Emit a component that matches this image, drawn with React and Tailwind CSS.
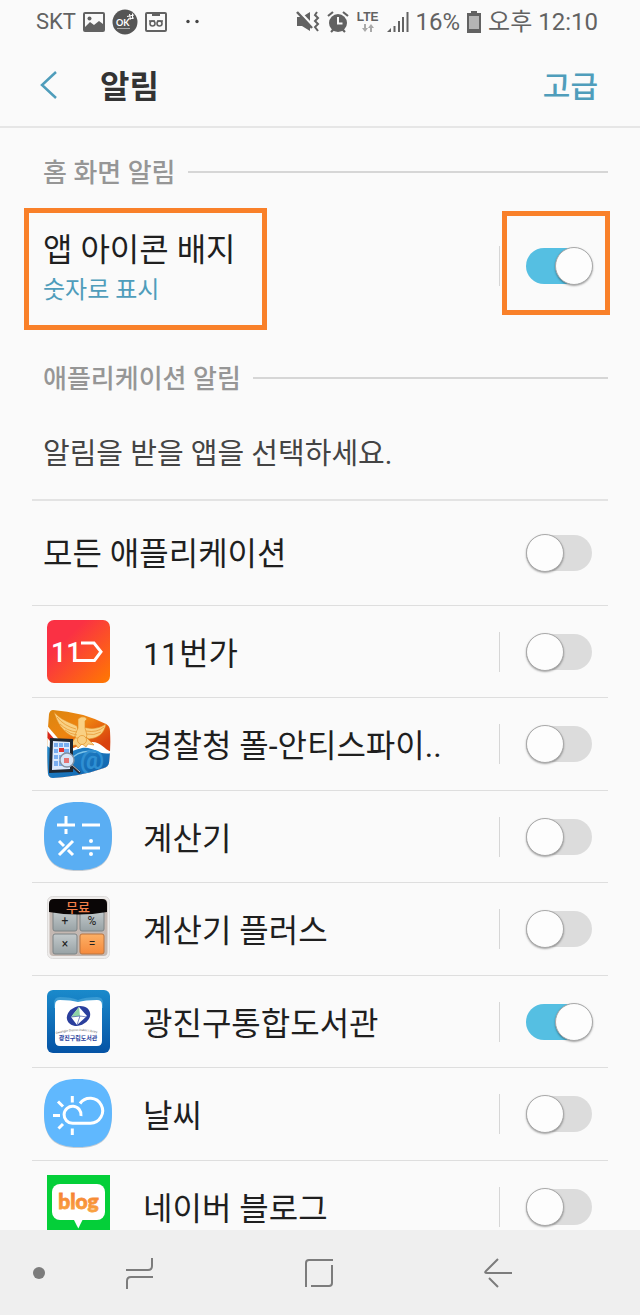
import React, { useState } from "react";

const SQUIRCLE =
  "M34 0 C58 0 68 10 68 34 C68 58 58 68 34 68 C10 68 0 58 0 34 C0 10 10 0 34 0 Z";

const ElevenIcon = () => (
  <svg viewBox="0 0 68 68" className="size-[68px]" aria-hidden="true">
    <defs>
      <linearGradient id="eleven" x1="0" y1="0" x2="1" y2="1">
        <stop offset="0.3" stopColor="#fa3144" />
        <stop offset="1" stopColor="#ff7a00" />
      </linearGradient>
    </defs>
    <rect x="3" y="2" width="63" height="63" rx="7" fill="url(#eleven)" />
    <text x="7" y="44" fill="#fff" className="font-[Roboto,sans-serif] text-[27px] font-medium">
      11
    </text>
    <path
      d="M29 42.5H50.5L57 33.7L50 25H37"
      fill="none"
      stroke="#fff"
      strokeWidth="3"
    />
  </svg>
);

const PoliceIcon = () => (
  <svg viewBox="0 0 68 68" className="size-[68px]" aria-hidden="true">
    <defs>
      <linearGradient id="sunset" x1="0" y1="0" x2="0.7" y2="1">
        <stop offset="0" stopColor="#d9860f" />
        <stop offset="0.4" stopColor="#ef8410" />
        <stop offset="0.75" stopColor="#d9410f" />
      </linearGradient>
      <linearGradient id="sea" x1="0" y1="0" x2="1" y2="1">
        <stop offset="0" stopColor="#2a8fd0" />
        <stop offset="1" stopColor="#0b5ca8" />
      </linearGradient>
      <clipPath id="shield">
        <path d="M9 0 Q38 2 62 14 Q66 16 66 21 Q67 38 65 53 Q64 57 60 58 Q38 66 9 68 Q5 68 4 64 Q2 34 5 4 Q6 0 9 0Z" />
      </clipPath>
    </defs>
    <g clipPath="url(#shield)">
      <rect width="68" height="68" fill="url(#sunset)" />
      <path d="M0 12L24 40L0 42Z" fill="#fff" />
      <path d="M0 17L18 38L14 40L0 24Z" fill="#d8281c" />
      <path d="M20 41C34 38 38 32 48 32C58 32 60 40 68 42V70H0V36Z" fill="#fff" />
      <path d="M0 34C20 48 26 41 38 38C50 36 54 46 68 43V70H0Z" fill="url(#sea)" />
      <path d="M24 52C32 42 42 40 52 42" stroke="#7cc4ea" strokeWidth="1.5" fill="none" />
      <text x="36" y="59" fill="#2f8fd2" className="font-[Roboto,sans-serif] text-[27px] font-bold">
        @
      </text>
    </g>
    {/* eagle */}
    <g fill="#f9d083" stroke="#e08a1d" strokeWidth="0.6">
      <path d="M10 2C13 12 18 22 30 27L35 24L33 16C25 12 17 10 10 2Z" />
      <path d="M62 14C60 24 54 28 45 29L38 25L40 17C48 20 56 18 62 14Z" />
      <path d="M34 9L37 7Q41 6 43 9L41 11V18L43 25L41 31H32L31 25L34 18Z" />
      <path d="M31 28L26 36L32 35L34 38L38 34L42 37L44 34L50 35L43 28Z" />
      <circle cx="38" cy="30" r="4.5" />
    </g>
    <g fill="none" stroke="#e79a35" strokeWidth="0.8">
      <path d="M13 7Q20 16 32 19M16 14Q23 21 33 22M21 20Q26 24 33 25" />
      <path d="M60 17Q53 23 42 21M57 22Q50 26 42 24" />
    </g>
    {/* tablet with magnifier */}
    <path d="M6 28L29 29V62L5 63Z" fill="#1f2630" />
    <path d="M9 31L26 32V59L8 60Z" fill="#dceafd" />
    <path
      d="M10 33h4v4h-4zM15 33h4v4h-4zM20 33h5v4h-5zM10 39h4v4h-4zM20 39h5v4h-5zM10 45h4v4h-4zM15 45h4v4h-4zM10 51h4v5h-4zM15 51h4v5h-4z"
      fill="#79aef0"
    />
    <rect x="15" y="38" width="5" height="4" fill="#e0322f" />
    <path d="M27 55L36 63" stroke="#27272f" strokeWidth="2.5" />
    <path d="M27 54L36 62" stroke="#eee" strokeWidth="0.8" />
    <circle cx="23" cy="50" r="7" fill="#d5e4f7" stroke="#83909f" strokeWidth="1.4" />
    <rect x="20" y="48" width="5" height="5" fill="#e57473" />
  </svg>
);

const CalculatorIcon = () => (
  <svg viewBox="0 1 68 68" className="size-[68px] overflow-visible" aria-hidden="true">
    <path d={SQUIRCLE} transform="translate(0 1)" fill="#c5ccd3" />
    <path d={SQUIRCLE} fill="#5aaef3" />
    <g fill="none" stroke="#fff" strokeWidth="3">
      <path d="M13 23H31M22 14V23M22 27V32" />
      <path d="M38 23H56" />
      <path d="M15 53L29 39M15 39L20 44M24 48L29 53" />
      <path d="M38 46H56" />
    </g>
    <circle cx="47" cy="39" r="2" fill="#fff" />
    <circle cx="47" cy="52" r="2" fill="#fff" />
  </svg>
);

const CalcPlusIcon = () => (
  <svg viewBox="0 0 68 68" className="size-[68px]" aria-hidden="true">
    <defs>
      <linearGradient id="key" x1="0" y1="0" x2="0" y2="1">
        <stop offset="0" stopColor="#c3cacc" />
        <stop offset="1" stopColor="#98a2a5" />
      </linearGradient>
      <linearGradient id="keyOrange" x1="0" y1="0" x2="0" y2="1">
        <stop offset="0" stopColor="#fdb066" />
        <stop offset="1" stopColor="#f58a3c" />
      </linearGradient>
    </defs>
    <rect x="3.5" y="1.5" width="62" height="62" rx="5" fill="#eeeceb" stroke="#dedcdb" />
    <rect x="5.5" y="4" width="58" height="57" rx="4" fill="#c4b8b2" />
    <g stroke="#7d8486" strokeWidth="1">
      <rect x="9" y="16" width="24" height="20" rx="2" fill="url(#key)" />
      <rect x="36" y="16" width="24" height="20" rx="2" fill="url(#key)" />
      <rect x="9" y="39" width="24" height="20" rx="2" fill="url(#key)" />
      <rect x="36" y="39" width="24" height="20" rx="2" fill="url(#keyOrange)" stroke="#b87442" />
    </g>
    <path d="M5 9Q5 4 10 4H58Q63 4 63 9V17Q34 22 5 17Z" fill="#0a0606" />
    <g textAnchor="middle" fill="#222" className="font-[Roboto,sans-serif] text-[12px]">
      <text x="21" y="30">+</text>
      <text x="48" y="30">%</text>
      <text x="21" y="53">×</text>
      <text x="48" y="53">=</text>
    </g>
    <text
      x="34"
      y="17"
      textAnchor="middle"
      fill="#f2804a"
      className="font-['Noto_Sans_CJK_KR',sans-serif] text-[13px] font-medium"
    >
      무료
    </text>
  </svg>
);

const LibraryIcon = () => (
  <svg viewBox="0 0 68 68" className="size-[68px]" aria-hidden="true">
    <defs>
      <linearGradient id="book" x1="0" y1="0" x2="0" y2="1">
        <stop offset="0" stopColor="#1a8acb" />
        <stop offset="1" stopColor="#0553a5" />
      </linearGradient>
    </defs>
    <rect x="3" y="2" width="63" height="63" rx="6" fill="url(#book)" />
    <path d="M10 15Q10 9 16 9Q27 9 34 12Q41 9 53 9Q59 9 59 15V20H10Z" fill="#3a9bd3" />
    <path d="M11 17Q11 12 16 12Q27 12 34 14Q41 12 53 12Q58 12 58 17V53Q58 58 53 58H16Q11 58 11 53Z" fill="#fff" />
    <ellipse cx="34.500" cy="28" rx="12" ry="9.500" transform="rotate(-22 34.500 28)" fill="#2a3f9d" />
    <path d="M35 19L43 28L33 37L27 29Z" fill="#fff" />
    <path d="M35 19L36 28L27 29Z" fill="#8ed3a5" />
    <path d="M27 29L36 28L43 29M36 28L33 37" stroke="#2a3f9d" strokeWidth="0.6" fill="none" />
    <path id="libraryArc" d="M12 46Q34 40 57 46" fill="none" />
    <text fill="#555" className="font-[Roboto,sans-serif] text-[3px]">
      <textPath href="#libraryArc">Gwangjin District Public Library</textPath>
    </text>
    <text
      x="34"
      y="52"
      textAnchor="middle"
      fill="#2a3f9d"
      className="font-['Noto_Sans_CJK_KR',sans-serif] text-[6px] font-bold"
    >
      광진구립도서관
    </text>
  </svg>
);

const WeatherIcon = () => (
  <svg viewBox="0 1 68 68" className="size-[68px] overflow-visible" aria-hidden="true">
    <path d={SQUIRCLE} transform="translate(0 1)" fill="#c5ccd3" />
    <path d={SQUIRCLE} fill="#60b8fe" />
    <g fill="none" stroke="#fff" strokeWidth="3">
      <path d="M28.300 17V23.500M14 22.500L19 27.500M9 36.500H16M14.500 49.500L19 45M28.300 49.500V56" />
      <path d="M37 37A8.500 8.500 0 1 0 28.500 44.300H46.500A12.500 12.500 0 1 0 36 24.500" />
    </g>
  </svg>
);

const BlogIcon = () => (
  <svg viewBox="0 0 68 68" className="size-[68px]" aria-hidden="true">
    <defs>
      <linearGradient id="blog" x1="0" y1="0" x2="0" y2="1">
        <stop offset="0" stopColor="#f57a2c" />
        <stop offset="1" stopColor="#f9a544" />
      </linearGradient>
    </defs>
    <rect x="3" y="2" width="63" height="64" fill="#04cf39" />
    <rect x="8" y="11" width="53" height="36" rx="8" fill="#fff" />
    <path d="M29.500 46H39L34.300 55.500Z" fill="#fff" />
    <text
      x="34.500"
      y="36"
      textAnchor="middle"
      fill="url(#blog)"
      stroke="url(#blog)"
      strokeWidth="0.8"
      className="font-[Lato,sans-serif] text-[21px] font-black"
    >
      blog
    </text>
  </svg>
);

const APPS = [
  { id: "eleven", name: "11번가", Icon: ElevenIcon, on: false },
  { id: "police", name: "경찰청 폴-안티스파이..", Icon: PoliceIcon, on: false },
  { id: "calc", name: "계산기", Icon: CalculatorIcon, on: false },
  { id: "calcplus", name: "계산기 플러스", Icon: CalcPlusIcon, on: false },
  { id: "library", name: "광진구통합도서관", Icon: LibraryIcon, on: true },
  { id: "weather", name: "날씨", Icon: WeatherIcon, on: false },
  { id: "blog", name: "네이버 블로그", Icon: BlogIcon, on: false },
];

const Toggle = ({ id, checked, onChange }) => (
  <input
    id={id}
    type="checkbox"
    role="switch"
    checked={checked}
    onChange={onChange}
    className="relative h-9 w-[66px] shrink-0 cursor-pointer appearance-none rounded-full bg-[#dcdcdc] before:absolute before:-top-px before:left-0 before:size-[38px] before:rounded-full before:border before:border-[#a9a9a9] before:bg-[#fdfdfd] before:shadow-[0_1px_2px_rgba(0,0,0,0.35)] checked:bg-[#55bfe2] checked:before:left-[29px]"
  />
);

const SectionHeader = ({ children }) => (
  <div className="flex h-20 items-center gap-3 pr-8 pl-[43px]">
    <h2 className="pt-0.5 text-[26px] leading-8 font-medium text-[#969696]">{children}</h2>
    <div className="h-[2px] flex-1 bg-[#d6d6d6]" />
  </div>
);

const StatusBar = () => (
  <div className="flex h-11 shrink-0 items-center justify-between pr-[42px] pl-9 text-2xl text-[#626262]">
    <div className="flex items-center gap-[7px]">
      <span className="text-[22px]">SKT</span>
      <svg viewBox="0 0 22 20" className="h-5 w-[22px]" aria-hidden="true">
        <rect x="1" y="1" width="20" height="18" rx="1" fill="none" stroke="#626262" strokeWidth="2" />
        <circle cx="6.500" cy="6.500" r="2" fill="#626262" />
        <path d="M2 15L7 10L11 13L16 9L20 12V18H2Z" fill="#626262" />
      </svg>
      <svg viewBox="0 0 26 26" className="size-[26px]" aria-hidden="true">
        <circle cx="13" cy="13" r="12.500" fill="#555" />
        <text x="4" y="17" fill="#fff" className="font-[Lato,sans-serif] text-[9px] font-bold">
          OK
        </text>
        <path d="M15 7.500L22 6M16 10L22 9M17.500 5L18.500 10.500M20.500 4.500V10" stroke="#fff" strokeWidth="1" />
        <path d="M5 19.500H18" stroke="#aaa" strokeWidth="1" />
      </svg>
      <svg viewBox="0 0 22 20" className="h-5 w-[22px]" aria-hidden="true">
        <rect x="1" y="1" width="20" height="18" rx="1" fill="none" stroke="#626262" strokeWidth="2" />
        <path d="M7 1H15V4H7Z" fill="#626262" />
        <g fill="none" stroke="#626262" strokeWidth="1.600">
          <circle cx="7.500" cy="11.500" r="2.500" />
          <circle cx="14.500" cy="11.500" r="2.500" />
          <path d="M4 9H10M18 9H12" />
        </g>
      </svg>
      <svg viewBox="0 0 32 20" className="h-5 w-8" aria-hidden="true">
        <circle cx="14" cy="9.500" r="1.700" fill="#444" />
        <circle cx="23" cy="9.500" r="1.700" fill="#444" />
      </svg>
    </div>
    <div className="flex items-center gap-[7px]">
      {/* muted, vibrating */}
      <svg viewBox="0 0 24 22" className="h-[22px] w-6" aria-hidden="true">
        <path d="M1 6H6L14 1V20L6 15H1Z" fill="#626262" />
        <path d="M2 -1L19 17" stroke="#fafafa" strokeWidth="2.500" />
        <path d="M1 1L16 17" stroke="#626262" strokeWidth="2.500" />
        <path d="M21 1L19 4L22 7L19 10L22 13L19 16L22 20" fill="none" stroke="#626262" strokeWidth="2" />
      </svg>
      <svg viewBox="0 0 22 22" className="size-[22px]" aria-hidden="true">
        <circle cx="11" cy="12" r="9" fill="#626262" />
        <path d="M1 5L6 1M21 5L16 1M4 21L7 18M18 21L15 18" stroke="#626262" strokeWidth="2.200" />
        <path d="M11 6V12.500H15.500" fill="none" stroke="#fafafa" strokeWidth="2" />
      </svg>
      <div className="flex flex-col items-center px-px">
        <span className="font-['Liberation_Sans',sans-serif] text-xs leading-3 font-bold">LTE</span>
        <svg viewBox="0 0 14 10" className="h-2.5 w-3.5" aria-hidden="true">
          <path d="M3 1h2v4h2L4 9L1 5h2zM9 9h2V5h2L10 1L7 5h2z" fill="#a9a9a9" />
        </svg>
      </div>
      <svg viewBox="0 0 22 22" className="size-[22px]" aria-hidden="true">
        <path d="M0 21L4 17V21ZM6.500 15H8.500V21H6.500ZM11 10H13V21H11ZM15 6H17V21H15ZM19.500 1H21.500V21H19.500Z" fill="#626262" />
      </svg>
      <span>16%</span>
      <svg viewBox="0 0 14 22" className="h-[22px] w-3.5" aria-hidden="true">
        <path d="M4 0H10V2H14V22H0V2H4Z" fill="#626262" />
        <rect x="2" y="5" width="10" height="13" fill="#b5b5b5" />
      </svg>
      <span>오후 12:10</span>
    </div>
  </div>
);

const NavBar = () => (
  <nav className="flex h-[85px] shrink-0 items-center gap-20 bg-[#efefef] pr-[127px] pl-[33px]">
    <button type="button" aria-label="내비게이션 바 숨기기" className="size-3 rounded-full bg-[#7c7c7c]" />
    <div className="flex flex-1 justify-between text-[#7c7c7c]">
      <button type="button" aria-label="최근 실행 앱">
        <svg viewBox="0 0 30 32" className="h-8 w-[30px]" fill="none" stroke="currentColor" strokeWidth="2">
          <path d="M1 13H23Q27 13 27 9V1M28 20H6Q2 20 2 24V32" />
        </svg>
      </button>
      <button type="button" aria-label="홈">
        <svg viewBox="0 0 30 32" className="h-8 w-[30px]" fill="none" stroke="currentColor" strokeWidth="2">
          <path d="M2 30V6Q2 3 5 3H29M28 8V26Q28 29 25 29H7" />
        </svg>
      </button>
      <button type="button" aria-label="뒤로">
        <svg viewBox="0 0 30 32" className="h-8 w-[30px]" fill="none" stroke="currentColor" strokeWidth="2">
          <path d="M15 2L3 14Q1 16 4 16H29M6 21L15 30" />
        </svg>
      </button>
    </div>
  </nav>
);

const App = () => {
  const [badge, setBadge] = useState(true);
  const [apps, setApps] = useState(APPS);

  const allOn = apps.every((app) => app.on);

  const toggleAll = () => {
    setApps(apps.map((app) => ({ ...app, on: !allOn })));
  };

  const toggleApp = (id) => {
    setApps(apps.map((app) => (app.id === id ? { ...app, on: !app.on } : app)));
  };

  return (
    <div
      lang="ko"
      className="flex h-screen flex-col bg-[#fafafa] font-[Roboto,'Noto_Sans_CJK_KR',sans-serif] text-[#1f1f1f]"
    >
      <StatusBar />

      <header className="flex h-[84px] shrink-0 items-center border-b-2 border-[#e6e6e6] pr-[42px] pl-10">
        <button type="button" aria-label="뒤로" className="mr-[42px]">
          <svg viewBox="0 0 18 28" className="h-7 w-[18px]" fill="none" stroke="#4f9dbb" strokeWidth="2.500">
            <path d="M16 1L2 14L16 27" />
          </svg>
        </button>
        <h1 className="flex-1 pt-1 text-[32px] leading-10 font-bold text-[#333]">알림</h1>
        <button type="button" className="pt-1 text-[30px] leading-10 font-medium text-[#4f9dbb]">
          고급
        </button>
      </header>

      <main className="min-h-0 flex-1 overflow-y-auto pt-1 [scrollbar-width:none]">
        <SectionHeader>홈 화면 알림</SectionHeader>

        <div className="relative mb-[18px] flex h-[108px] items-center pr-12 pl-[43px]">
          <label htmlFor="badge" className="flex flex-1 flex-col pt-2">
            <span className="text-[32px] leading-10">앱 아이콘 배지</span>
            <span className="text-2xl leading-10 text-[#4f9dbb]">숫자로 표시</span>
          </label>
          <div className="mr-[26px] h-10 w-px bg-[#d6d6d6]" />
          <Toggle id="badge" checked={badge} onChange={() => setBadge(!badge)} />
          {/* highlight frames */}
          <div className="pointer-events-none absolute -top-1 left-6 h-[122px] w-[243px] border-5 border-[#f98029]" />
          <div className="pointer-events-none absolute -top-px right-[30px] h-[104px] w-[108px] border-5 border-[#f98029]" />
        </div>

        <SectionHeader>애플리케이션 알림</SectionHeader>

        <p className="h-[81px] px-[43px] pt-4 text-[29px] leading-10 text-[#444]">
          알림을 받을 앱을 선택하세요.
        </p>

        <div className="mx-8">
          <div className="flex h-[106px] items-center border-t-2 border-[#e3e3e3] pr-4 pl-[11px]">
            <label htmlFor="all" className="flex-1 pt-0.5 text-[32px] leading-10">
              모든 애플리케이션
            </label>
            <Toggle id="all" checked={allOn} onChange={toggleAll} />
          </div>

          <ul>
            {apps.map(({ id, name, Icon, on }) => (
              <li
                key={id}
                className="flex h-[92px] items-center border-t border-[#dedede] pr-4 pl-3 even:h-[93px]"
              >
                <Icon />
                <label htmlFor={id} className="ml-[31px] flex-1 pt-1 text-[32px] leading-10">
                  {name}
                </label>
                <div className="mr-[26px] h-10 w-px bg-[#d6d6d6]" />
                <Toggle id={id} checked={on} onChange={() => toggleApp(id)} />
              </li>
            ))}
          </ul>
        </div>
      </main>

      <NavBar />
    </div>
  );
};

export default App;
